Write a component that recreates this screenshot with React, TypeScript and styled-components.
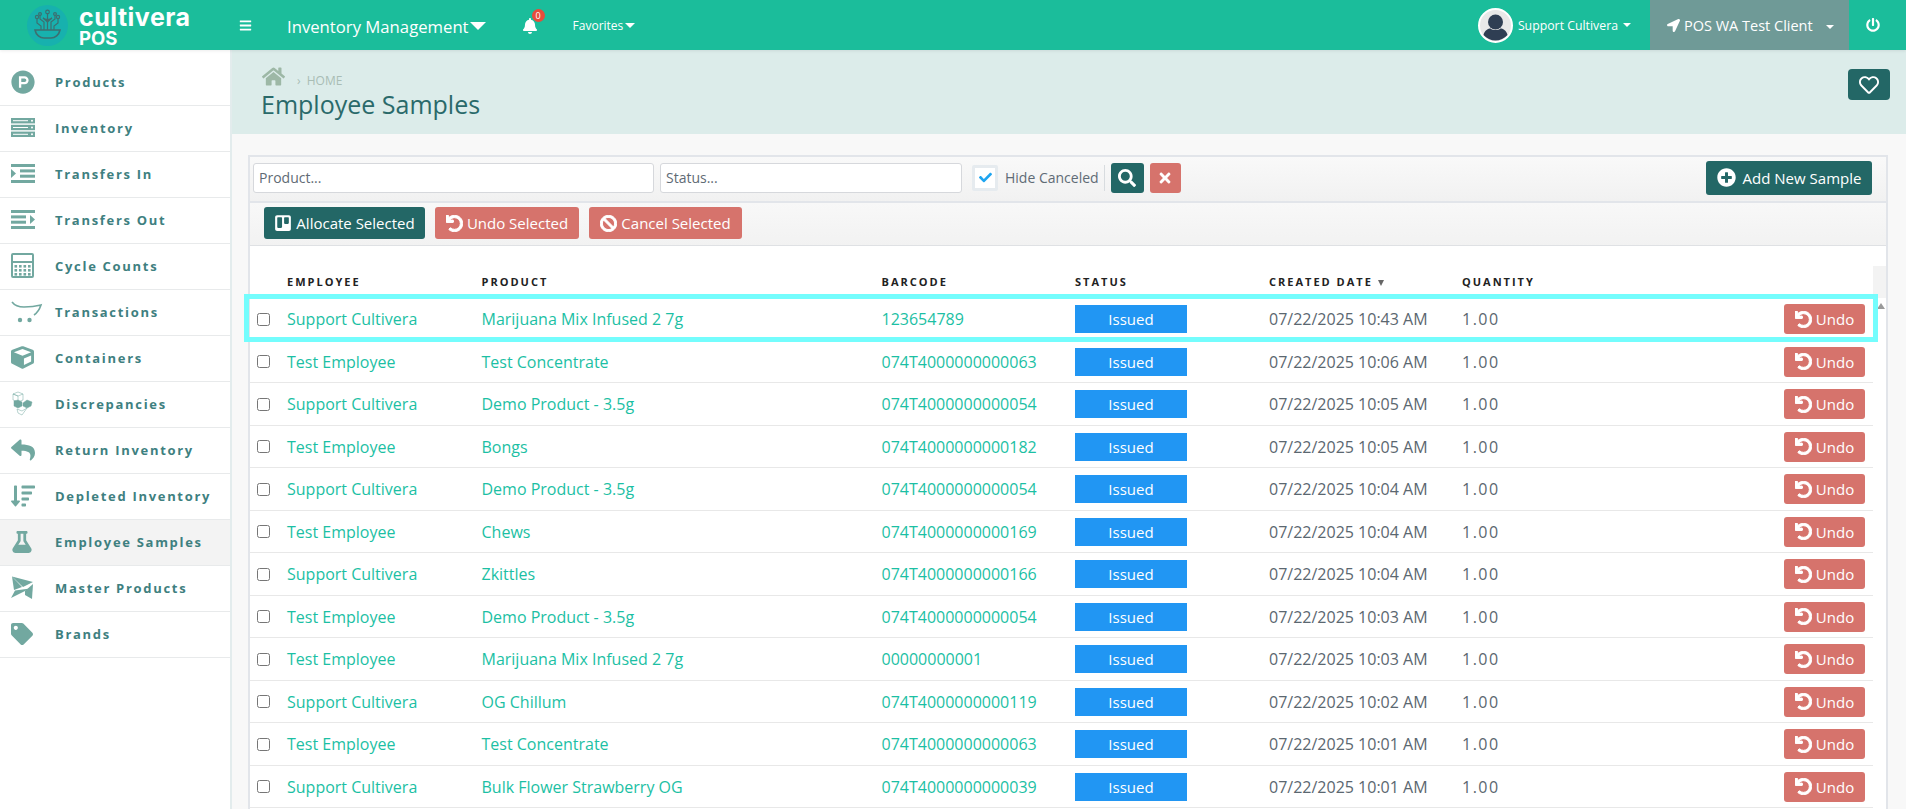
import styled, { createGlobalStyle } from 'styled-components';
import {
  FaBan,
  FaBars,
  FaBell,
  FaCheck,
  FaCube,
  FaFlask,
  FaHome,
  FaLocationArrow,
  FaPlusCircle,
  FaPowerOff,
  FaProductHunt,
  FaRegHeart,
  FaReply,
  FaSearch,
  FaSortAmountDown,
  FaTag,
  FaTimes,
  FaTrello,
  FaUndo,
} from 'react-icons/fa';

const GlobalStyle = createGlobalStyle`
  html, body {
    margin: 0;
    height: 100%;
    overflow: hidden;
    background: #f8f8f8;
    font-family: "Open Sans", "Liberation Sans", sans-serif;
  }
  * { box-sizing: border-box; }
`;

const TEAL = '#236766';
const RED = '#d6736c';
const ICON = '#72a8a0';

const Shell = styled.div`
  display: flex;
  flex-direction: column;
  height: 809px;
  overflow: hidden;
`;

/* top bar */
const Topbar = styled.header`
  display: flex;
  align-items: center;
  flex: none;
  height: 50px;
  background: #1bbd9b;
  color: #fff;
  box-shadow: 0 1px 3px rgba(0, 0, 0, 0.08);
  position: relative;
  z-index: 2;
`;

const Logo = styled.div`
  display: flex;
  align-items: center;
  flex: none;
  width: 239px;
  padding-left: 27px;
  gap: 11px;
`;

const LogoWords = styled.div`
  display: flex;
  flex-direction: column;
  padding-top: 3px;
  font-family: Inter, "Open Sans", sans-serif;
  font-weight: 700;
`;

const LogoName = styled.span`
  height: 20px;
  font-size: 25px;
  line-height: 20px;
  letter-spacing: 0.5px;
`;

const LogoPos = styled.span`
  height: 16px;
  margin-top: 3px;
  font-size: 18.5px;
  line-height: 16px;
`;

const ModuleName = styled.div`
  display: flex;
  align-items: center;
  gap: 1px;
  margin-left: 35px;
  padding-top: 2px;
  font-size: 16.7px;
`;

const Caret = styled.i<{ $size: number }>`
  display: inline-block;
  border-left: ${(p) => p.$size}px solid transparent;
  border-right: ${(p) => p.$size}px solid transparent;
  border-top: ${(p) => p.$size}px solid #fff;
`;

const BellWrap = styled.div`
  position: relative;
  display: flex;
  margin-left: 36px;
  padding-top: 1px;
`;

const Badge = styled.span`
  position: absolute;
  top: -8px;
  right: -7px;
  width: 13px;
  height: 13px;
  border-radius: 50%;
  background: #e74c3c;
  font-size: 9px;
  line-height: 13px;
  text-align: center;
`;

const Favorites = styled.div`
  display: flex;
  align-items: center;
  gap: 2px;
  margin-left: 35px;
  font-size: 12px;
`;

const UserMenu = styled.div`
  display: flex;
  align-items: center;
  margin-left: auto;
  margin-right: 19px;
  gap: 5px;
  font-size: 12.3px;
`;

const Avatar = styled.svg`
  width: 35px;
  height: 35px;
  margin-right: 0;
`;

const ClientMenu = styled.div`
  display: flex;
  align-items: center;
  align-self: stretch;
  flex: none;
  width: 199px;
  padding-left: 17px;
  gap: 4px;
  background: #6f9a97;
  font-size: 14.5px;
`;

const ClientCaret = styled(Caret)`
  margin-left: 9px;
  margin-top: 3px;
`;

const PowerCell = styled.div`
  display: flex;
  align-items: center;
  justify-content: center;
  flex: none;
  width: 57px;
  padding-right: 9px;
`;

/* page frame */
const Body = styled.div`
  flex: 1;
  display: flex;
  min-height: 0;
`;

const Sidebar = styled.nav`
  flex: none;
  width: 232px;
  padding-top: 10px;
  background: #fff;
  border-right: 2px solid #e3eced;
`;

const NavItem = styled.div<{ $active?: boolean }>`
  display: flex;
  align-items: center;
  height: 46px;
  padding: 0 0 2px 11px;
  background: ${(p) => (p.$active ? '#f3f3f3' : '#fff')};
  border-bottom: 1.5px solid #e8eaeb;
  color: #3e8080;
  font-size: 13px;
  font-weight: 700;
  letter-spacing: 1.7px;
`;

const NavIcon = styled.span`
  display: flex;
  align-items: center;
  flex: none;
  width: 44px;
  color: ${ICON};
`;

const Main = styled.main`
  flex: 1;
  display: flex;
  flex-direction: column;
  min-width: 0;
`;

const PageHead = styled.div`
  display: flex;
  justify-content: space-between;
  flex: none;
  height: 84px;
  padding: 17px 16px 0 30px;
  background: #dcecea;
`;

const Crumbs = styled.div`
  display: flex;
  align-items: flex-end;
  height: 21px;
  color: #a9bdb5;
  font-size: 12px;
  line-height: 14px;
`;

const CrumbText = styled.span`
  margin-left: 12px;
  word-spacing: 3px;
`;

const Title = styled.h1`
  margin: 0 0 0 -1px;
  color: #2a6a6a;
  font-size: 25px;
  font-weight: 400;
  line-height: 33px;
`;

const HeartButton = styled.button`
  display: flex;
  align-items: center;
  justify-content: center;
  width: 42px;
  height: 31px;
  margin-top: 2px;
  border: 0;
  border-radius: 4px;
  background: ${TEAL};
  color: #fff;
`;

const Content = styled.div`
  flex: 1;
  padding: 21px 18px 0 16px;
  min-height: 0;
`;

const Panel = styled.section`
  height: 100%;
  background: #fff;
  border: 2px solid #e2e5ea;
  border-bottom: 0;
`;

const FilterBar = styled.div`
  display: flex;
  align-items: center;
  height: 46px;
  padding: 0 14px 3px 3px;
  background: linear-gradient(#f9f9f9, #f1f1f1);
  border-bottom: 2px solid #e2e5ea;
`;

const TextInput = styled.input<{ $width: number }>`
  width: ${(p) => p.$width}px;
  height: 30px;
  padding: 0 5px;
  border: 1px solid #d6d8dc;
  border-radius: 3px;
  background: #fff;
  font: 14px "Open Sans", sans-serif;
  &::placeholder {
    color: #5f6b75;
    opacity: 1;
  }
`;

const StatusInput = styled(TextInput)`
  margin-left: 6px;
`;

const CheckBox = styled.span`
  display: flex;
  align-items: center;
  justify-content: center;
  width: 26px;
  height: 26px;
  margin-left: 10px;
  border: 3px solid #e6ebef;
  border-radius: 2px;
  background: #fff;
  color: #1ea5f0;
`;

const CheckLabel = styled.span`
  margin: 1px 0 0 7px;
  padding-right: 5px;
  border-right: 1px solid #d8dcdf;
  color: #5f6b75;
  font-size: 14px;
  line-height: 26px;
`;

const IconButton = styled.button<{ $color: string; $width: number; $gap: number }>`
  display: flex;
  align-items: center;
  justify-content: center;
  width: ${(p) => p.$width}px;
  height: 30px;
  margin-left: ${(p) => p.$gap}px;
  padding: 0;
  border: 0;
  border-radius: 3px;
  background: ${(p) => p.$color};
  color: #fff;
`;

const Button = styled.button<{ $color: string; $width?: number }>`
  display: flex;
  align-items: center;
  justify-content: center;
  width: ${(p) => (p.$width ? `${p.$width}px` : 'auto')};
  height: 32px;
  gap: 4px;
  padding: 0;
  border: 0;
  border-radius: 3px;
  background: ${(p) => p.$color};
  color: #fff;
  font: 15px "Open Sans", sans-serif;
  white-space: nowrap;
`;

const AddButton = styled(Button)`
  height: 34px;
  margin-left: auto;
  gap: 7px;
`;

const ActionBar = styled.div`
  display: flex;
  align-items: center;
  gap: 10px;
  height: 43px;
  padding: 0 0 2px 14px;
  background: linear-gradient(#f8f8f8, #f2f2f2);
  border-bottom: 1px solid #dfe1e4;
`;

const TableArea = styled.div`
  display: grid;
  grid-template-columns: 1fr 13px;
`;

const columns = '37px 194.5px 400px 193.5px 194px 193px 1fr';

const HeadRow = styled.div`
  display: grid;
  grid-template-columns: ${columns};
  align-items: end;
  height: 52px;
  padding-bottom: 9px;
  color: #222;
  font-size: 11px;
  font-weight: 700;
  letter-spacing: 2px;
  line-height: 15px;
`;

const SortArrow = styled.span`
  display: inline-block;
  margin-left: 5px;
  border-left: 3.5px solid transparent;
  border-right: 3.5px solid transparent;
  border-top: 6px solid #666;
  vertical-align: 0;
`;

const HeadGutter = styled.div`
  margin-top: 20px;
  height: 32px;
  background: #f3f3f3;
`;

const Row = styled.div`
  display: grid;
  grid-template-columns: ${columns};
  align-items: center;
  height: 42.5px;
  padding-top: 1px;
  border-bottom: 1px solid #e8e8e8;
  font-size: 16px;
  color: #5b6770;
`;

const RowCheck = styled.input`
  margin: 0 0 0 7px;
  width: 13px;
  height: 13px;
`;

const LinkText = styled.span`
  color: #1cbfa4;
`;

const StatusBadge = styled.span`
  display: block;
  width: 112px;
  height: 28px;
  background: #2196f3;
  color: #fff;
  font-size: 15px;
  line-height: 28px;
  text-align: center;
`;

const Quantity = styled.span`
  letter-spacing: 1.5px;
`;

const RowActions = styled.div`
  display: flex;
  align-items: center;
  justify-content: space-between;
`;

const UndoButton = styled(Button)`
  height: 30px;
  margin-right: 8px;
`;

const ScrollTrack = styled.div`
  position: relative;
  background: #fff;
`;

const ScrollArrow = styled.span`
  position: absolute;
  top: 5px;
  left: 4px;
  border-left: 4px solid transparent;
  border-right: 4px solid transparent;
  border-bottom: 6px solid #9a9a9a;
`;

const Highlight = styled.div`
  position: absolute;
  left: 244px;
  top: 294px;
  width: 1634px;
  height: 48px;
  border: 5px solid #74fdfd;
  pointer-events: none;
  z-index: 3;
`;

/* drawn icons */
const LogoMark = () => (
  <svg width="41" height="41" viewBox="0 0 41 41" fill="none">
    <circle cx="20.5" cy="20.5" r="20.5" fill="#17b1ae" />
    <g stroke="#3d6f70" strokeWidth="1.2">
      <path d="M8 25h25c-1 5-5 8-9 8h-7c-4 0-8-3-9-8z" strokeWidth="1.6" />
      <path d="M20.5 25V8M14 25v-4l-4-3V13M27 25v-4l4-3v-5M17 25v-8l-4-3V10M24 25v-8l4-3v-4" />
      <path d="M16 13c2 2 7 2 9 0l-4.5 4z" fill="#3d6f70" />
      <circle cx="20.5" cy="7" r="1.8" />
      <circle cx="10" cy="12" r="1.6" />
      <circle cx="31" cy="12" r="1.6" />
      <circle cx="13" cy="9" r="1.4" />
      <circle cx="28" cy="9" r="1.4" />
    </g>
  </svg>
);

const ServerIcon = () => (
  <svg width="24" height="19" viewBox="0 0 24 19" fill={ICON}>
    <rect width="24" height="5.4" />
    <rect y="6.8" width="24" height="5.4" />
    <rect y="13.6" width="24" height="5.4" />
    <g fill="#fff">
      <rect x="2" y="2.2" width="15" height="1" />
      <rect x="2" y="9" width="15" height="1" />
      <rect x="2" y="15.8" width="15" height="1" />
      <circle cx="21" cy="2.7" r="1" />
      <circle cx="21" cy="9.5" r="1" />
      <circle cx="21" cy="16.3" r="1" />
    </g>
  </svg>
);

const IndentIcon = ({ flip }: { flip?: boolean }) => (
  <svg width="24" height="19" viewBox="0 0 24 19" fill={ICON}>
    <rect width="24" height="3" />
    <rect y="16" width="24" height="3" />
    {flip ? (
      <>
        <rect y="5.4" width="15" height="3" />
        <rect y="10.700" width="15" height="3" />
        <path d="M24 9.500l-5-4.500v9z" />
      </>
    ) : (
      <>
        <rect x="9" y="5.4" width="15" height="3" />
        <rect x="9" y="10.700" width="15" height="3" />
        <path d="M0 5l5 4.500L0 14z" />
      </>
    )}
  </svg>
);

const CalcIcon = () => (
  <svg width="23" height="25" viewBox="0 0 23 25" fill={ICON}>
    <path d="M2 0h19a2 2 0 0 1 2 2v21a2 2 0 0 1-2 2H2a2 2 0 0 1-2-2V2a2 2 0 0 1 2-2zm0 2v6h19V2zm0 8v13h19V10z" fillRule="evenodd" />
    {[3.5, 8, 12.5, 17].map((x) =>
      [12, 16, 20].map((y) => <rect key={`${x}-${y}`} x={x} y={y} width="2.6" height="2.6" />),
    )}
  </svg>
);

const CartIcon = () => (
  <svg width="32" height="22" viewBox="0 0 32 22" fill="none" stroke={ICON}>
    <path d="M1 1c3 4 7 5 12 5 7 0 13-1 17-2-1 3-4 8-7 10" strokeWidth="1.6" />
    <circle cx="9" cy="19" r="2.2" fill={ICON} stroke="none" />
    <circle cx="18.500" cy="19" r="2.2" fill={ICON} stroke="none" />
  </svg>
);

const CubesIcon = () => (
  <svg width="22" height="25" viewBox="0 0 22 25" fill={ICON} stroke={ICON} strokeWidth="0.5">
    <path d="M2 3l5-2 5 2-5 2z" fill="none" />
    <path d="M2 3v6l5 2V5zM12 3v6l-5 2" fill="none" />
    <path d="M3 10l4-1 4 2v4l-4 2-4-2z" />
    <path d="M12 12l4-3 5 2-1 4-4 2-4-2z" />
    <path d="M6 18l5 2 5-3-5 7-4-2z" fill="none" />
  </svg>
);

const PinwheelIcon = () => (
  <svg width="23" height="24" viewBox="0 0 23 24" fill={ICON}>
    <path d="M1 .5L22 6l-10 5z" />
    <path d="M1 .5L11 11l-8 3z" />
    <path d="M0 22l4-7.500 15-2z" />
    <path d="M14 19l7 4 1-15-8 7z" />
  </svg>
);

const items = [
  { label: 'Products', icon: <FaProductHunt size={24} /> },
  { label: 'Inventory', icon: <ServerIcon /> },
  { label: 'Transfers In', icon: <IndentIcon /> },
  { label: 'Transfers Out', icon: <IndentIcon flip /> },
  { label: 'Cycle Counts', icon: <CalcIcon /> },
  { label: 'Transactions', icon: <CartIcon /> },
  { label: 'Containers', icon: <FaCube size={23} /> },
  { label: 'Discrepancies', icon: <CubesIcon /> },
  { label: 'Return Inventory', icon: <FaReply size={24} /> },
  { label: 'Depleted Inventory', icon: <FaSortAmountDown size={24} /> },
  { label: 'Employee Samples', icon: <FaFlask size={22} />, active: true },
  { label: 'Master Products', icon: <PinwheelIcon /> },
  { label: 'Brands', icon: <FaTag size={22} /> },
];

const rows = [
  ['Support Cultivera', 'Marijuana Mix Infused 2 7g', '123654789', '07/22/2025 10:43 AM'],
  ['Test Employee', 'Test Concentrate', '074T4000000000063', '07/22/2025 10:06 AM'],
  ['Support Cultivera', 'Demo Product - 3.5g', '074T4000000000054', '07/22/2025 10:05 AM'],
  ['Test Employee', 'Bongs', '074T4000000000182', '07/22/2025 10:05 AM'],
  ['Support Cultivera', 'Demo Product - 3.5g', '074T4000000000054', '07/22/2025 10:04 AM'],
  ['Test Employee', 'Chews', '074T4000000000169', '07/22/2025 10:04 AM'],
  ['Support Cultivera', 'Zkittles', '074T4000000000166', '07/22/2025 10:04 AM'],
  ['Test Employee', 'Demo Product - 3.5g', '074T4000000000054', '07/22/2025 10:03 AM'],
  ['Test Employee', 'Marijuana Mix Infused 2 7g', '00000000001', '07/22/2025 10:03 AM'],
  ['Support Cultivera', 'OG Chillum', '074T4000000000119', '07/22/2025 10:02 AM'],
  ['Test Employee', 'Test Concentrate', '074T4000000000063', '07/22/2025 10:01 AM'],
  ['Support Cultivera', 'Bulk Flower Strawberry OG', '074T4000000000039', '07/22/2025 10:01 AM'],
];

const App = () => {
  return (
    <Shell>
      <GlobalStyle />
      <Topbar>
        <Logo>
          <LogoMark />
          <LogoWords>
            <LogoName>cultivera</LogoName>
            <LogoPos>POS</LogoPos>
          </LogoWords>
        </Logo>
        <FaBars size={13} />
        <ModuleName>
          Inventory Management <Caret $size={8} />
        </ModuleName>
        <BellWrap>
          <FaBell size={16} />
          <Badge>0</Badge>
        </BellWrap>
        <Favorites>
          Favorites <Caret $size={5} />
        </Favorites>
        <UserMenu>
          <Avatar viewBox="0 0 35 35">
            <circle cx="17.500" cy="17.500" r="16.500" fill="#e8e8e8" stroke="#fff" strokeWidth="2" />
            <circle cx="17.500" cy="14" r="7.500" fill="#2f3e53" />
            <path d="M5.500 27c1-5 5-6.500 7-6.500 2 2 8 2 10 0 2 0 6 1.500 7 6.500-3 3.500-7.500 5.500-12 5.500S8.500 30.500 5.500 27z" fill="#2f3e53" />
          </Avatar>
          Support Cultivera <Caret $size={4} />
        </UserMenu>
        <ClientMenu>
          <FaLocationArrow size={13} />
          POS WA Test Client
          <ClientCaret $size={4} />
        </ClientMenu>
        <PowerCell>
          <FaPowerOff size={14} />
        </PowerCell>
      </Topbar>
      <Body>
        <Sidebar>
          {items.map((item) => (
            <NavItem key={item.label} $active={item.active}>
              <NavIcon>{item.icon}</NavIcon>
              {item.label}
            </NavItem>
          ))}
        </Sidebar>
        <Main>
          <PageHead>
            <div>
              <Crumbs>
                <FaHome size={23} color="#9db8a6" />
                <CrumbText>› HOME</CrumbText>
              </Crumbs>
              <Title>Employee Samples</Title>
            </div>
            <HeartButton>
              <FaRegHeart size={20} />
            </HeartButton>
          </PageHead>
          <Content>
            <Panel>
              <FilterBar>
                <TextInput $width={401} placeholder="Product..." />
                <StatusInput $width={302} placeholder="Status..." />
                <CheckBox>
                  <FaCheck size={13} />
                </CheckBox>
                <CheckLabel>Hide Canceled</CheckLabel>
                <IconButton $color={TEAL} $width={33} $gap={6}>
                  <FaSearch size={18} />
                </IconButton>
                <IconButton $color={RED} $width={31} $gap={6}>
                  <FaTimes size={16} />
                </IconButton>
                <AddButton $color={TEAL} $width={166}>
                  <FaPlusCircle size={19} />
                  Add New Sample
                </AddButton>
              </FilterBar>
              <ActionBar>
                <Button $color={TEAL} $width={161}>
                  <FaTrello size={18} />
                  Allocate Selected
                </Button>
                <Button $color={RED} $width={144}>
                  <FaUndo size={17} strokeWidth={30} />
                  Undo Selected
                </Button>
                <Button $color={RED} $width={153}>
                  <FaBan size={17} strokeWidth={30} />
                  Cancel Selected
                </Button>
              </ActionBar>
              <TableArea>
                <HeadRow>
                  <span />
                  <span>EMPLOYEE</span>
                  <span>PRODUCT</span>
                  <span>BARCODE</span>
                  <span>STATUS</span>
                  <span>
                    CREATED DATE
                    <SortArrow />
                  </span>
                  <span>QUANTITY</span>
                </HeadRow>
                <HeadGutter />
                <div>
                  {rows.map((row, i) => (
                    <Row key={i}>
                      <RowCheck type="checkbox" />
                      <LinkText>{row[0]}</LinkText>
                      <LinkText>{row[1]}</LinkText>
                      <LinkText>{row[2]}</LinkText>
                      <StatusBadge>Issued</StatusBadge>
                      <span>{row[3]}</span>
                      <RowActions>
                        <Quantity>1.00</Quantity>
                        <UndoButton $color={RED} $width={81}>
                          <FaUndo size={17} strokeWidth={30} />
                          Undo
                        </UndoButton>
                      </RowActions>
                    </Row>
                  ))}
                </div>
                <ScrollTrack>
                  <ScrollArrow />
                </ScrollTrack>
              </TableArea>
            </Panel>
          </Content>
        </Main>
      </Body>
      <Highlight />
    </Shell>
  );
};

export default App;
